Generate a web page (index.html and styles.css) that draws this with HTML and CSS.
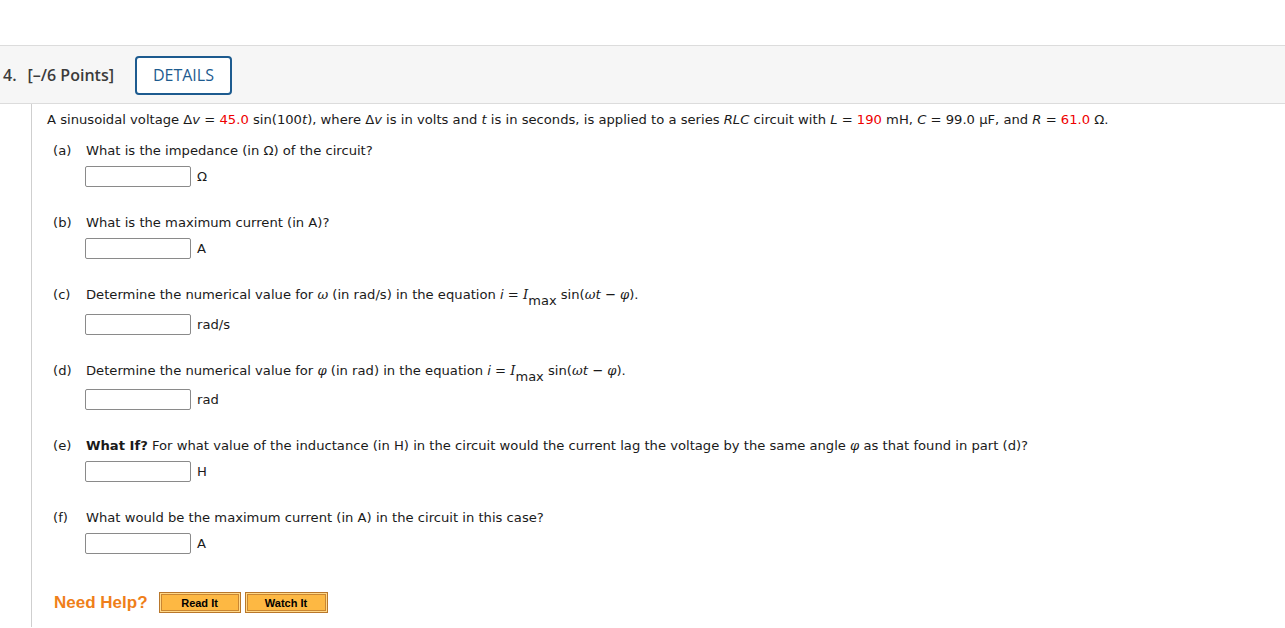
FILE: index.html
```html
<!DOCTYPE html>
<html>
<head>
<meta charset="utf-8">
<link rel="stylesheet" href="styles.css">
</head>
<body>
<div class="top-space"></div>
<div class="q-header">
  <span class="q-num">4.</span>
  <span class="q-points">[–/6 Points]</span>
  <button class="details-btn">DETAILS</button>
</div>
<div class="q-body">
  <p class="intro">A sinusoidal voltage Δ<i>v</i> = <span class="red">45.0</span> sin(100<i>t</i>), where Δ<i>v</i> is in volts and <i>t</i> is in seconds, is applied to a series <i>RLC</i> circuit with <i>L</i> = <span class="red">190</span> mH, <i>C</i> = 99.0 μF, and <i>R</i> = <span class="red">61.0</span> Ω.</p>

  <div class="part part-a">
    <div class="part-q"><span class="lbl">(a)</span><span>What is the impedance (in Ω) of the circuit?</span></div>
    <div class="answer"><span class="box"></span><span class="unit">Ω</span></div>
  </div>

  <div class="part">
    <div class="part-q"><span class="lbl">(b)</span><span>What is the maximum current (in A)?</span></div>
    <div class="answer"><span class="box"></span><span class="unit">A</span></div>
  </div>

  <div class="part">
    <div class="part-q sub-line"><span class="lbl">(c)</span><span>Determine the numerical value for <i class="gr">ω</i> (in rad/s) in the equation <i>i</i> = <i class="serif">I</i><sub>max</sub> sin(<i class="gr">ω</i><i>t</i> − <i class="gr">φ</i>).</span></div>
    <div class="answer"><span class="box"></span><span class="unit">rad/s</span></div>
  </div>

  <div class="part">
    <div class="part-q sub-line sub-d"><span class="lbl">(d)</span><span>Determine the numerical value for <i class="gr">φ</i> (in rad) in the equation <i>i</i> = <i class="serif">I</i><sub>max</sub> sin(<i class="gr">ω</i><i>t</i> − <i class="gr">φ</i>).</span></div>
    <div class="answer"><span class="box"></span><span class="unit">rad</span></div>
  </div>

  <div class="part">
    <div class="part-q"><span class="lbl">(e)</span><span><b>What If?</b> For what value of the inductance (in H) in the circuit would the current lag the voltage by the same angle <i class="gr">φ</i> as that found in part (d)?</span></div>
    <div class="answer"><span class="box"></span><span class="unit">H</span></div>
  </div>

  <div class="part">
    <div class="part-q"><span class="lbl">(f)</span><span>What would be the maximum current (in A) in the circuit in this case?</span></div>
    <div class="answer"><span class="box"></span><span class="unit">A</span></div>
  </div>

  <div class="help">
    <span class="help-text">Need Help?</span>
    <span class="help-btn">Read It</span>
    <span class="help-btn watch">Watch It</span>
  </div>
</div>
</body>
</html>
```
FILE: styles.css
```css
html, body {
  margin: 0;
  padding: 0;
  background: #fff;
}
body {
  font-family: "DejaVu Sans", Verdana, sans-serif;
  font-size: 13.15px;
  color: #1a1a1a;
}
.top-space {
  height: 45px;
}
.q-header {
  height: 57px;
  border-top: 1px solid #dcdcdc;
  border-bottom: 1px solid #dcdcdc;
  background: #f6f6f6;
  display: flex;
  align-items: center;
  font-family: "Open Sans", sans-serif;
  color: #3b3b3b;
}
.q-num {
  font-size: 16px;
  font-weight: 600;
  margin-left: 3px;
}
.q-points {
  font-size: 16px;
  font-weight: 600;
  margin-left: 11px;
}
.details-btn {
  margin-left: 21px;
  width: 97px;
  height: 39px;
  border: 2px solid #1d5b8f;
  border-radius: 4px;
  background: #fff;
  color: #1d5b8f;
  font-family: "Open Sans", sans-serif;
  font-size: 16px;
  padding: 0;
  margin-top: 1px;
}
.q-body {
  margin-left: 31px;
  border-left: 1px solid #cfcfcf;
  padding: 8px 0 14px 15px;
  min-height: 523px;
  box-sizing: border-box;
}
.intro {
  margin: 0;
  line-height: 16px;
}
.red {
  color: #ee0000;
}
.part {
  padding-left: 6px;
}
.part-a {
  margin-top: 15px;
}
.part + .part {
  margin-top: 28px;
}
.part-q {
  display: grid;
  grid-template-columns: 33px auto;
  line-height: 16px;
}
.sub-line {
  padding-bottom: 4px;
}
.sub-d {
  padding-bottom: 3px;
}
sub {
  font-size: 13px;
  line-height: 0;
  vertical-align: -6px;
}
.serif {
  font-family: "DejaVu Serif", "Liberation Serif", serif;
}
.gr {
  font-family: "DejaVu Serif", serif;
}
.answer {
  display: flex;
  align-items: center;
  margin-top: 7px;
  margin-left: 32px;
}
.box {
  display: block;
  width: 104px;
  height: 19px;
  border: 1px solid #8a8a8a;
  border-radius: 2px;
  background: #fff;
}
.unit {
  margin-left: 6px;
  line-height: 16px;
}
.help {
  display: flex;
  align-items: center;
  margin-top: 38px;
  margin-left: 7px;
}
.help-text {
  font-family: "Liberation Sans", Arial, sans-serif;
  font-weight: bold;
  font-size: 17px;
  color: #ef7f1a;
}
.help-btn {
  display: flex;
  align-items: center;
  justify-content: center;
  width: 80px;
  height: 19px;
  margin-left: 11px;
  border: 1px solid #b9772b;
  background: #fdb843;
  box-shadow: inset 0 0 0 1px #ffd98a, inset 0 0 0 2px #c98632;
  font-family: "Liberation Sans", Arial, sans-serif;
  font-weight: bold;
  font-size: 11px;
  color: #000;
}
.help-btn.watch {
  width: 81px;
  margin-left: 4px;
}
```
